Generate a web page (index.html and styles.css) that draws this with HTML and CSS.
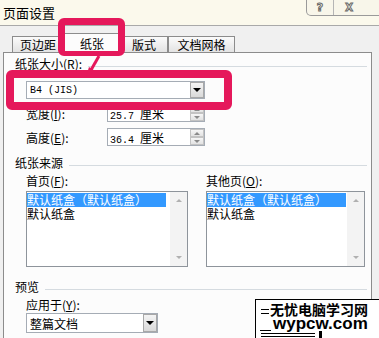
FILE: index.html
```html
<!DOCTYPE html>
<html lang="zh-CN">
<head>
    <meta charset="UTF-8">
    <meta name="viewport" content="width=device-width, initial-scale=1.0">
    <title>页面设置</title>
    <link rel="stylesheet" href="styles.css">
</head>
<body>

<div class="titlebar">
    <span class="title">页面设置</span>
    <div class="caption-btns">
        <span class="cbtn help">?</span>
        <span class="cbtn close">X</span>
    </div>
</div>

<div class="tabs">
    <div class="tab t1">页边距</div>
    <div class="tab active">纸张</div>
    <div class="tab t3">版式</div>
    <div class="tab t4">文档网格</div>
</div>

<div class="panel">
    <!-- 纸张大小 -->
    <div class="group-head"><span>纸张大小(<u>R</u>):</span><i></i></div>
    <div class="combo size-combo">
        <span class="val mono">B4 (JIS)</span>
        <span class="drop"></span>
    </div>
    <div class="field-row first">
        <label>宽度(<u>I</u>):</label>
        <div class="spin">
            <span class="val"><span class="mono num">25.7</span>厘米</span>
            <span class="arrows"><b class="up"></b><b class="down"></b></span>
        </div>
    </div>
    <div class="field-row">
        <label>高度(<u>E</u>):</label>
        <div class="spin">
            <span class="val"><span class="mono num">36.4</span>厘米</span>
            <span class="arrows"><b class="up"></b><b class="down"></b></span>
        </div>
    </div>

    <!-- 纸张来源 -->
    <div class="group-head source-head"><span>纸张来源</span><i></i></div>
    <div class="source">
        <div class="col">
            <div class="col-label">首页(<u>F</u>):</div>
            <div class="list">
                <div class="item selected">默认纸盒（默认纸盒）</div>
                <div class="item">默认纸盒</div>
                <div class="vscroll"><b class="up"></b><b class="down"></b></div>
            </div>
        </div>
        <div class="col right">
            <div class="col-label">其他页(<u>O</u>):</div>
            <div class="list">
                <div class="item selected">默认纸盒（默认纸盒）</div>
                <div class="item">默认纸盒</div>
                <div class="vscroll"><b class="up"></b><b class="down"></b></div>
            </div>
        </div>
    </div>

    <!-- 预览 -->
    <div class="group-head preview-head"><span>预览</span><i></i></div>
    <div class="col-label apply-label">应用于(<u>Y</u>):</div>
    <div class="combo apply-combo">
        <span class="val">整篇文档</span>
        <span class="drop"></span>
    </div>
</div>

<!-- 标注 -->
<div class="mark mark-tab"></div>
<div class="mark mark-combo"></div>
<svg class="mark-arrow" width="24" height="28" viewBox="0 0 24 28">
    <line x1="19" y1="3" x2="11" y2="17" stroke="#e5185b" stroke-width="3"/>
    <polygon points="6,24 9,14 15,18" fill="#e5185b"/>
</svg>

<div class="watermark">
    <div class="wm-cn">无忧电脑学习网</div>
    <div class="wm-en">wypcw.com</div>
    <span class="wm-dash d1"></span>
    <span class="wm-dash d2"></span>
    <span class="wm-dash d3"></span>
    <span class="wm-line l1"></span>
    <span class="wm-line l2"></span>
    <span class="wm-bar"></span>
</div>

</body>
</html>
```

FILE: styles.css
```css
body {
    margin: 0;
    width: 379px;
    height: 338px;
    overflow: hidden;
    position: relative;
    background-color: #f0f0f0;
    font-family: "Noto Sans CJK SC", sans-serif;
    font-size: 12px;
    color: #000;
}
u {
    text-decoration: underline;
}
.mono {
    font-family: "Liberation Mono", monospace;
    font-size: 10px;
}
.num {
    margin-right: 6px;
}

/* 标题栏 */
.titlebar {
    height: 25px;
    background-color: #fbf9ec;
    border-bottom: 1px solid #a9a9a9;
    display: flex;
    align-items: center;
    position: relative;
}
.title {
    margin-left: 3px;
    font-size: 13px;
    line-height: 14px;
}
.caption-btns {
    position: absolute;
    left: 306px;
    top: -1px;
    width: 78px;
    height: 16px;
    display: flex;
    border: 1px solid #9a9a9a;
    border-top: none;
    border-radius: 0 0 5px 5px;
    background-color: #f8f6ea;
}
.cbtn {
    display: flex;
    align-items: center;
    justify-content: center;
    font-family: "DejaVu Sans", sans-serif;
    font-weight: bold;
    font-size: 11px;
    color: #fbf9ec;
    -webkit-text-stroke: 1px #6a6a6a;
}
.help {
    width: 26px;
    border-right: 1px solid #b5b5b5;
}
.close {
    width: 30px;
    font-size: 10px;
}

/* 选项卡 */
.tabs {
    display: flex;
    align-items: flex-end;
    height: 16px;
    margin: 10px 0 0 12px;
    position: relative;
    z-index: 1;
}
.tab {
    box-sizing: border-box;
    height: 16px;
    border: 1px solid #8c8c8c;
    border-bottom: none;
    background: linear-gradient(#fbfbfb, #e3e3e3);
    text-align: center;
    line-height: 15px;
}
.t1 { width: 52px; }
.t3 { width: 48px; }
.t4 { width: 67px; }
.tab.active {
    width: 60px;
    height: 20px;
    margin: 0 -2px;
    position: relative;
    top: 1px;
    background: #fcfcfc;
    line-height: 20px;
    z-index: 2;
}

.panel {
    margin-left: 3px;
    width: 369px;
    height: 286px;
    box-sizing: border-box;
    border: 1px solid #8c8c8c;
    border-bottom: none;
    background-color: #fcfcfc;
    padding-left: 11px;
    overflow: hidden;
}

.group-head {
    display: flex;
    align-items: center;
    line-height: 14px;
    margin-top: 4px;
}
.group-head i {
    flex: 1;
    border-top: 1px solid #d5dbe0;
    margin: 5px 4px 0 6px;
}
.source-head { margin-top: 10px; }
.preview-head { margin-top: 13px; }

/* 下拉框 */
.combo {
    box-sizing: border-box;
    height: 18px;
    margin-left: 11px;
    border: 1px solid #a5acb5;
    background-color: #fff;
    display: flex;
    align-items: center;
    position: relative;
}
.combo .val {
    padding-left: 3px;
}
.size-combo {
    width: 179px;
    margin-top: 10px;
}
.apply-combo {
    width: 132px;
    height: 20px;
    margin-top: 1px;
}
.drop {
    position: absolute;
    right: 0;
    top: 0;
    bottom: 0;
    width: 14px;
    box-sizing: border-box;
    border: 1px solid #a8a8a8;
    background: linear-gradient(#f4f4f4, #d9d9d9);
    display: flex;
    align-items: center;
    justify-content: center;
}
.drop::after {
    content: "";
    border-left: 4px solid transparent;
    border-right: 4px solid transparent;
    border-top: 4px solid #000;
}

/* 数字框 */
.field-row {
    display: flex;
    align-items: center;
    height: 18px;
    margin: 6px 0 0 11px;
}
.field-row.first { margin-top: 5px; }
.field-row label {
    width: 81px;
}
.spin {
    box-sizing: border-box;
    width: 98px;
    height: 18px;
    border: 1px solid #a5acb5;
    background-color: #fff;
    display: flex;
    align-items: center;
    position: relative;
}
.spin .val {
    padding-left: 2px;
}
.arrows {
    position: absolute;
    right: 0;
    top: 0;
    bottom: 0;
    width: 14px;
    display: flex;
    flex-direction: column;
}
.arrows b, .vscroll b {
    flex: 1;
    display: flex;
    align-items: center;
    justify-content: center;
}
.arrows b {
    border: 1px solid #c3c3c3;
    background: linear-gradient(#f6f6f6, #e2e2e2);
}
.arrows .up::after, .vscroll .up::after {
    content: "";
    border-left: 3px solid transparent;
    border-right: 3px solid transparent;
    border-bottom: 3px solid #8a8a8a;
}
.arrows .down::after, .vscroll .down::after {
    content: "";
    border-left: 3px solid transparent;
    border-right: 3px solid transparent;
    border-top: 3px solid #8a8a8a;
}

/* 纸张来源 */
.source {
    display: grid;
    grid-template-columns: 162px 159px;
    column-gap: 18px;
    margin: 4px 0 0 11px;
}
.col-label {
    line-height: 14px;
}
.list {
    position: relative;
    box-sizing: border-box;
    height: 76px;
    margin-top: 3px;
    border: 1px solid #8e949b;
    background-color: #fff;
    padding-top: 1px;
}
.item {
    width: 139px;
    height: 14px;
    line-height: 14px;
    white-space: nowrap;
}
.item.selected {
    background-color: #3399ff;
    color: #fff;
}
.vscroll {
    position: absolute;
    top: 0;
    right: 0;
    bottom: 0;
    width: 17px;
    background-color: #f3f3f3;
    display: flex;
    flex-direction: column;
    justify-content: space-between;
}
.vscroll b {
    flex: none;
    height: 17px;
}
.vscroll .up::after { border-bottom-color: #b0b0b0; }
.vscroll .down::after { border-top-color: #b0b0b0; }

.apply-label {
    margin: 4px 0 0 11px;
}

/* 红色标注 */
.mark {
    position: absolute;
    box-sizing: border-box;
    border: 7px solid #e5185b;
    border-radius: 6px;
    z-index: 5;
}
.mark-tab {
    left: 58px;
    top: 18px;
    width: 67px;
    height: 38px;
    border-bottom-width: 5px;
}
.mark-combo {
    left: 6px;
    top: 70px;
    width: 226px;
    height: 40px;
    border-width: 8px;
}
.mark-arrow {
    position: absolute;
    left: 80px;
    top: 53px;
    z-index: 6;
}

/* 水印 */
.watermark {
    position: absolute;
    left: 255px;
    top: 299px;
    width: 130px;
    height: 45px;
    background-color: #fff;
    border: 1px solid #000;
    z-index: 4;
}
.wm-cn {
    position: absolute;
    left: 14px;
    top: 1px;
    font-size: 14px;
    font-weight: bold;
    line-height: 16px;
    white-space: nowrap;
}
.wm-en {
    position: absolute;
    left: 17px;
    top: 16px;
    font-family: "Liberation Sans", Arial, sans-serif;
    font-size: 17px;
    font-weight: bold;
    line-height: 16px;
}
.wm-dash, .wm-line, .wm-bar {
    position: absolute;
    background-color: #000;
}
.wm-dash { height: 1px; width: 8px; left: 5px; }
.d1 { top: 9px; }
.d2 { top: 13px; }
.d3 { top: 30px; left: 4px; width: 11px; }
.wm-line { height: 1px; left: 5px; width: 54px; }
.l1 { top: 33px; }
.l2 { top: 36px; }
.wm-bar { left: 63px; top: 31px; width: 3px; height: 14px; }
```
